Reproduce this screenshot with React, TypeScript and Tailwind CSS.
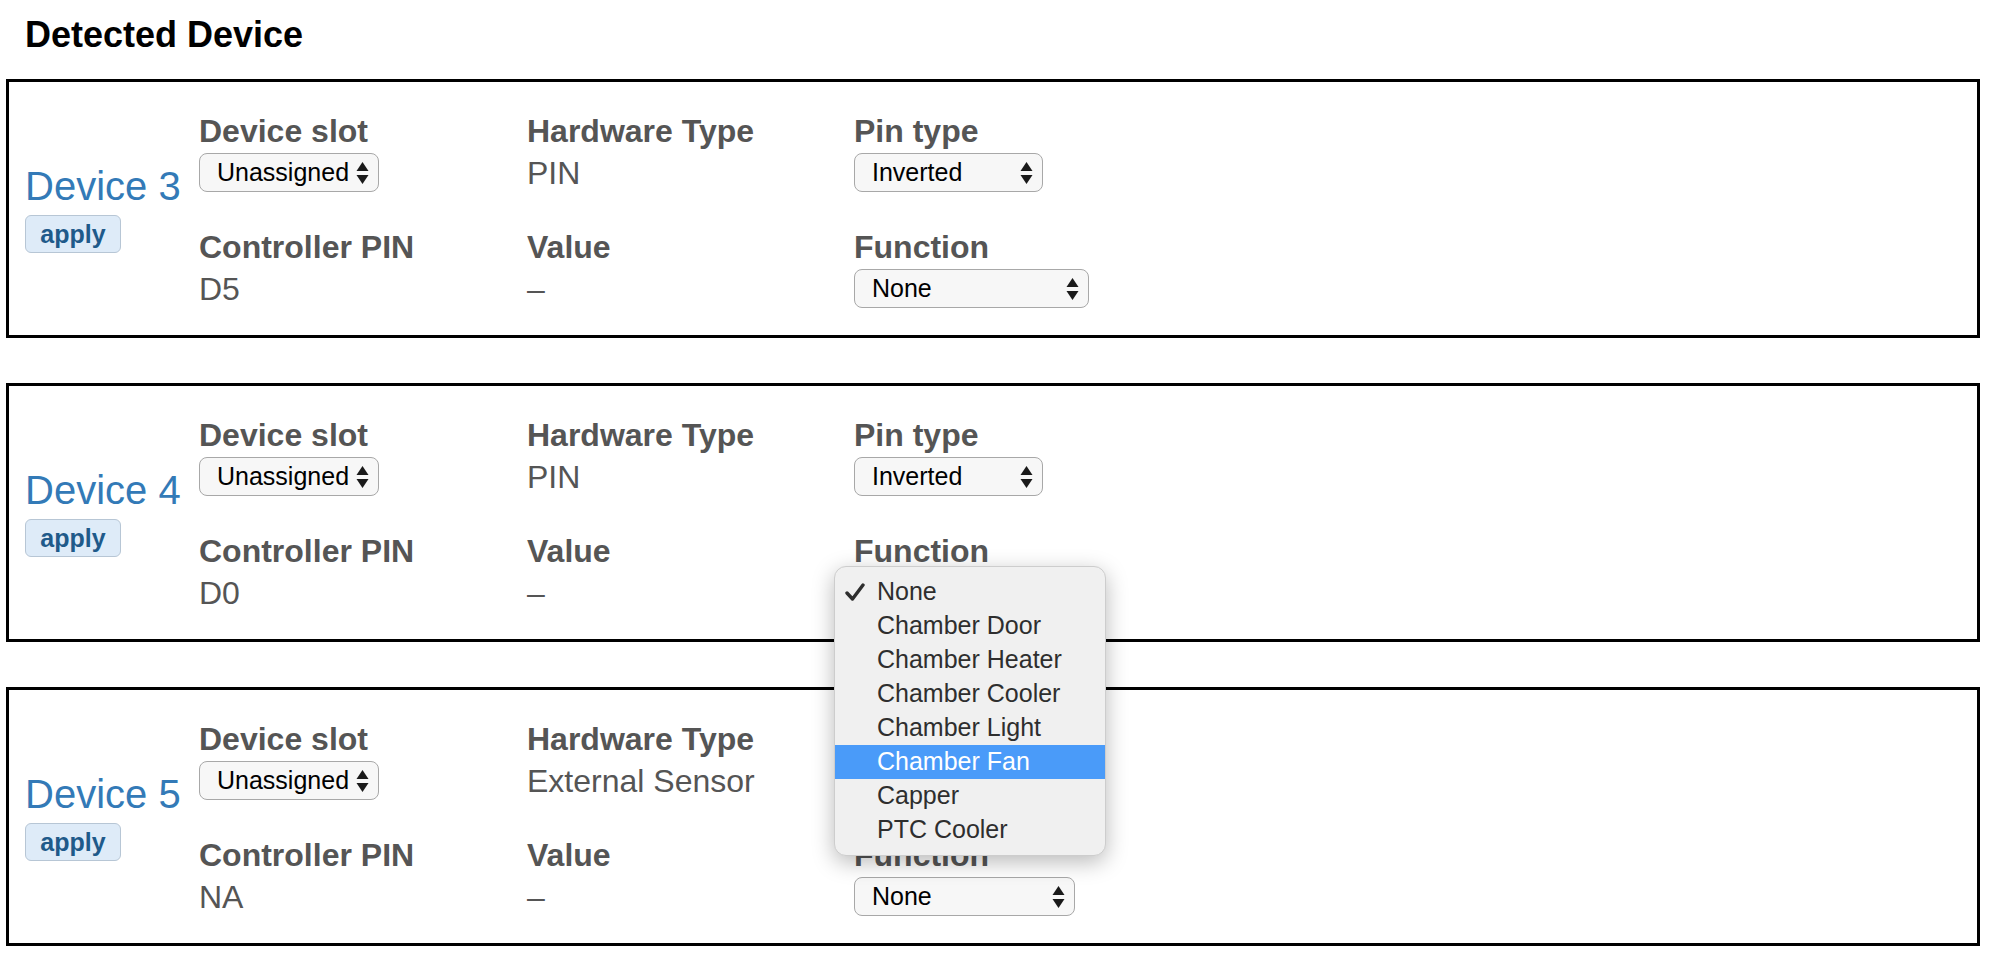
import React from 'react'

type Device = {
  name: string
  slot: string
  hardware: string
  pinType: string
  pin: string
  value: string
  fn: string
  fnWidth: string
  open?: boolean
}

const DEVICES: Device[] = [
  { name: 'Device 3', slot: 'Unassigned', hardware: 'PIN', pinType: 'Inverted', pin: 'D5', value: '–', fn: 'None', fnWidth: 'w-[235px]' },
  { name: 'Device 4', slot: 'Unassigned', hardware: 'PIN', pinType: 'Inverted', pin: 'D0', value: '–', fn: 'None', fnWidth: 'w-[235px]', open: true },
  { name: 'Device 5', slot: 'Unassigned', hardware: 'External Sensor', pinType: 'Inverted', pin: 'NA', value: '–', fn: 'None', fnWidth: 'w-[221px]' },
]

const FUNCTIONS = [
  'None',
  'Chamber Door',
  'Chamber Heater',
  'Chamber Cooler',
  'Chamber Light',
  'Chamber Fan',
  'Capper',
  'PTC Cooler',
]

function Arrows() {
  return (
    <svg width="13" height="24" viewBox="0 0 13 24" className="shrink-0">
      <path d="M6.5 1 L12.5 10 L0.5 10 Z" fill="#1a1a1a" />
      <path d="M6.5 23 L12.5 14 L0.5 14 Z" fill="#1a1a1a" />
    </svg>
  )
}

function FakeSelect({ value, width, children }: { value: string; width: string; children?: React.ReactNode }) {
  return (
    <div className={`relative h-[39px] ${width}`}>
      <button
        type="button"
        className="flex h-full w-full items-center justify-between rounded-[8px] border border-[#a8a8a8] bg-[#f7f7f7] pl-[17px] pr-[9px] text-[25px] text-black"
      >
        <span>{value}</span>
        <Arrows />
      </button>
      {children}
    </div>
  )
}

function FunctionMenu({ selected, hover }: { selected: string; hover: string }) {
  return (
    <div className="absolute left-[-20px] top-[-7px] z-10 w-[272px] rounded-[12px] border border-[#cdcdcd] bg-[#f0f0f0] py-[8px] shadow-[0_6px_22px_rgba(0,0,0,0.28)]">
      {FUNCTIONS.map((f) => (
        <div
          key={f}
          className={`flex h-[34px] items-center text-[25px] ${
            f === hover ? 'bg-[#4a9bf9] text-white' : 'text-[#2e2e2e]'
          }`}
        >
          <span className="flex w-[42px] items-center pl-[10px]">
            {f === selected && (
              <svg width="20" height="18" viewBox="0 0 20 18">
                <path d="M2 10 L7.5 16 L18 2" fill="none" stroke="#2e2e2e" strokeWidth="3.4" strokeLinecap="round" strokeLinejoin="round" />
              </svg>
            )}
          </span>
          <span>{f}</span>
        </div>
      ))}
    </div>
  )
}

function Field({ label, children }: { label: string; children: React.ReactNode }) {
  return (
    <div className="flex flex-col gap-[5px]">
      <p className="h-[34px] text-[32px] font-bold leading-[34px] text-[#555]">{label}</p>
      <div className="flex h-[39px] items-center text-[32px] text-[#555]">{children}</div>
    </div>
  )
}

function DeviceCard({ d }: { d: Device }) {
  return (
    <div className="flex items-center border-[3px] border-black pl-[16px]">
      <div className="flex w-[174px] flex-col items-start">
        <h3 className="text-[40px] leading-[44px] text-[#337ab7]">{d.name}</h3>
        <button
          type="button"
          className="mt-[7px] h-[38px] w-[96px] rounded-[6px] border border-[#b7c6d5] bg-[#deebf8] text-[25px] font-bold text-[#1f5a8a]"
        >
          apply
        </button>
      </div>
      <div className="grid grid-cols-[328px_327px_1fr] gap-y-[38px] pb-[27px] pt-[32px]">
        <Field label="Device slot">
          <FakeSelect value={d.slot} width="w-[180px]" />
        </Field>
        <Field label="Hardware Type">{d.hardware}</Field>
        <Field label="Pin type">
          <FakeSelect value={d.pinType} width="w-[189px]" />
        </Field>
        <Field label="Controller PIN">{d.pin}</Field>
        <Field label="Value">{d.value}</Field>
        <Field label="Function">
          <FakeSelect value={d.fn} width={d.fnWidth}>
            {d.open && <FunctionMenu selected="None" hover="Chamber Fan" />}
          </FakeSelect>
        </Field>
      </div>
    </div>
  )
}

export default function App() {
  return (
    <div className="min-h-screen bg-white pl-[6px] pr-[10px] pt-[15px] font-['Liberation_Sans',Arial,Helvetica,sans-serif]">
      <h2 className="pl-[19px] text-[36px] font-bold leading-[40px] text-black">Detected Device</h2>
      <div className="mt-[24px] flex flex-col gap-[45px]">
        {DEVICES.map((d) => (
          <DeviceCard key={d.name} d={d} />
        ))}
      </div>
    </div>
  )
}
